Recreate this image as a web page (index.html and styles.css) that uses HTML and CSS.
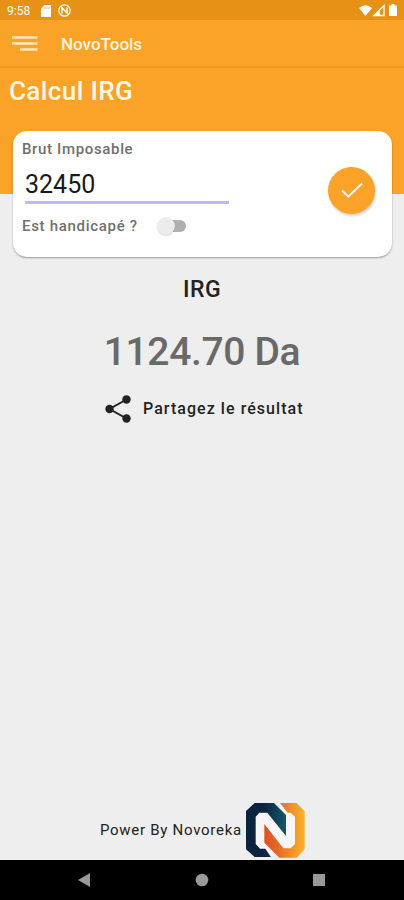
FILE: index.html
```
<!DOCTYPE html>
<html lang="fr">
<head>
<meta charset="utf-8">
<title>NovoTools</title>
<link rel="stylesheet" href="styles.css">
</head>
<body>
<div class="status">
  <span class="clock">9:58</span>
  <svg class="sd" width="10" height="12" viewBox="0 0 10 12"><path d="M3.5 0H10V12H0V3.5Z" fill="#fff"/><path d="M4 2v2M6 2v2M8 2v2" stroke="#e69216" stroke-width=".7"/></svg>
  <svg class="badge" width="13" height="13" viewBox="0 0 13 13" fill="none" stroke="#fff"><circle cx="6.5" cy="6.5" r="5.7" stroke-width="1.2"/><path d="M4 9.5V3.7L9 9V3.5M3.5 3l6 6.5" stroke-width="1.4"/></svg>
  <svg class="signals" width="40" height="14" viewBox="0 0 40 14"><path d="M0 4Q6.5-1.500 13 4L6.500 12Z" fill="#fff"/><path d="M15 11.500L25 1.500V11.500Z" fill="none" stroke="#fff" stroke-width="1.300"/><path d="M15 11.500L21 5.500V11.500Z" fill="#fff"/><path d="M32.500 0h3v1.500H38V12H30V1.500h2.500Z" fill="#fff"/></svg>
</div>
<header class="appbar">
  <svg width="26" height="16" viewBox="0 0 26 16" stroke="#ffe5bf" stroke-width="2.400"><path d="M0 1.500H25.500M0 7.500H25.500M8 13.500H25.500"/></svg>
  <span class="app-name">NovoTools</span>
</header>
<main class="page">
  <h1>Calcul IRG</h1>
  <section class="card">
    <div class="fields">
      <div class="label gross">Brut Imposable</div>
      <div class="amount"><span>32450</span></div>
      <div class="option"><span class="label disabled">Est handicapé ?</span><span class="switch"><i></i></span></div>
    </div>
    <div class="confirm"><svg width="24" height="20" viewBox="0 0 24 20" fill="none" stroke="#fff" stroke-width="2"><path d="M2 9.500L8.300 15.700L22 2.500"/></svg></div>
  </section>
  <h2><span>IRG</span></h2>
  <div class="result"><span>1124.70 Da</span></div>
  <div class="share">
    <svg width="27" height="28" viewBox="0 0 27 28"><path d="M21.500 4.500L4.500 14L21.500 23.500" fill="none" stroke="#222" stroke-width="2"/><g fill="#222"><circle cx="21.500" cy="4.500" r="4.200"/><circle cx="4.500" cy="14" r="4.200"/><circle cx="21.500" cy="23.500" r="4.200"/></g></svg>
    <span>Partagez le résultat</span>
  </div>
  <footer>
    <span>Power By Novoreka</span>
    <svg width="60" height="56" viewBox="495 36 180 168">
      <defs>
        <linearGradient id="navy" x1="0" x2="1"><stop offset=".45" stop-color="#0c2340"/><stop offset="1" stop-color="#125965"/></linearGradient>
        <linearGradient id="gold" x1="0" x2="1"><stop offset="0" stop-color="#dc4f24"/><stop offset=".35" stop-color="#e66b26"/><stop offset=".75" stop-color="#f39a26"/><stop offset="1" stop-color="#fbb02c"/></linearGradient>
      </defs>
      <path d="M535 62H585L600 39L650 65V165L635 180H600L573 201L553 180H535L523 165V75Z" fill="#f6f6f6"/>
      <path d="M498 63L524 39H582L618 75V138L562 68H538L527 80V162L540 176H556L573 201H524L498 178Z" fill="url(#navy)"/>
      <path d="M600 39H650L674 64V178L650 203H598L553 158V102L610 175H632L645 162V80L632 68H623Z" fill="url(#gold)"/>
    </svg>
  </footer>
</main>
<nav class="system-nav">
  <svg width="14" height="16" viewBox="0 0 14 16"><path d="M13 1V15L1 8Z" fill="#999"/></svg>
  <svg width="14" height="14" viewBox="0 0 14 14"><circle cx="7" cy="7" r="6.300" fill="#999"/></svg>
  <svg width="14" height="14" viewBox="0 0 14 14"><path d="M1 1H13V13H1Z" fill="#999"/></svg>
</nav>
</body>
</html>
```
FILE: styles.css
```
* { box-sizing: border-box; }
body {
  margin: 0;
  width: 404px;
  height: 900px;
  display: flex;
  flex-direction: column;
  overflow: hidden;
  font-family: Roboto, sans-serif;
  background: #eee;
  color: #222;
}
svg { display: block; flex: none; }
span { white-space: nowrap; }
.status {
  height: 20px;
  display: flex;
  align-items: center;
  padding: 1px 5px 0 7px;
  background: #e69216;
  color: #fff;
}
.clock { font-size: 12px; width: 34px; }
.badge { margin-left: 7px; }
.signals { margin-left: auto; margin-top: 1px; }
.appbar {
  height: 48px;
  display: flex;
  align-items: center;
  padding: 3px 0 2px 12px;
  background: #fba328;
  border-bottom: 2px solid #f09b23;
}
.app-name {
  margin-left: 23px;
  font-size: 17px;
  font-weight: 500;
  color: #fff3df;
}
.page {
  flex: 1;
  display: flex;
  flex-direction: column;
  background: linear-gradient(#fba328 126px, #eee 126px);
}
h1 {
  margin: 0;
  height: 63px;
  padding: 7px 0 0 9px;
  font-size: 26px;
  line-height: 32px;
  font-weight: 500;
  letter-spacing: .4px;
  color: #fff8ea;
}
.card {
  height: 126px;
  margin: 0 12px 0 13px;
  padding: 8px 17px 0 9px;
  display: flex;
  justify-content: space-between;
  background: #fff;
  border-radius: 14px;
  box-shadow: 0 1px 2px rgba(0, 0, 0, .35);
}
.label { font-size: 15px; line-height: 20px; font-weight: 500; color: #707070; }
.gross { letter-spacing: .65px; }
.disabled { letter-spacing: .7px; }
.amount {
  width: 204px;
  height: 37px;
  margin: 8px 0 0 3px;
  padding-top: 3px;
  border-bottom: 3px solid #bdb8f4;
  font-size: 25px;
  line-height: 30px;
  color: #191919;
}
.option { display: flex; align-items: center; margin-top: 12px; }
.switch {
  width: 26px;
  height: 12px;
  margin-left: 22px;
  border-radius: 6px;
  background: #b0b0b0;
}
.switch i {
  display: block;
  width: 18px;
  height: 18px;
  margin: -3px 0 0 -3px;
  border-radius: 50%;
  background: #ececec;
  box-shadow: 0 1px 1px rgba(0, 0, 0, .15);
}
.confirm {
  width: 47px;
  height: 47px;
  margin-top: 28px;
  display: grid;
  place-items: center;
  border-radius: 50%;
  background: #fba328;
  box-shadow: 1px 2px 3px rgba(0, 0, 0, .2);
}
h2 {
  margin: 19px 0 0;
  text-align: center;
  font-size: 23px;
  line-height: 28px;
  font-weight: 500;
  letter-spacing: .5px;
}
.result {
  margin-top: 25px;
  text-align: center;
  font-size: 39px;
  line-height: 46px;
  font-weight: 500;
  letter-spacing: -.35px;
  color: #696969;
}
.share {
  display: flex;
  align-items: center;
  margin: 20px 0 0 105px;
  font-size: 16px;
  font-weight: 500;
}
.share span { margin: -2px 0 0 11px; letter-spacing: 1.05px; }
footer {
  display: flex;
  align-items: center;
  margin: auto 0 2px 100px;
  font-size: 15px;
}
footer span { width: 145px; letter-spacing: .72px; }
.system-nav {
  height: 40px;
  display: flex;
  justify-content: space-between;
  align-items: center;
  padding: 0 78px 0 77px;
  background: #000;
}
```
